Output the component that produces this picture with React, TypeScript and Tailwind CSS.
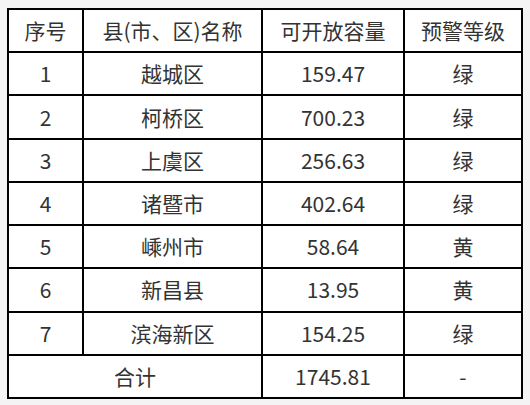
import React from "react";

const rows = [
  ["1", "越城区", "159.47", "绿"],
  ["2", "柯桥区", "700.23", "绿"],
  ["3", "上虞区", "256.63", "绿"],
  ["4", "诸暨市", "402.64", "绿"],
  ["5", "嵊州市", "58.64", "黄"],
  ["6", "新昌县", "13.95", "黄"],
  ["7", "滨海新区", "154.25", "绿"],
];

const cell = "bg-white flex items-center justify-center";

export default function App() {
  return (
    <div
      className="w-[530px] h-[405px] overflow-hidden bg-[#f4f4f4] pt-[8px] pl-[7px]"
      style={{ fontFamily: '"Noto Sans CJK SC", "Noto Sans", sans-serif' }}
    >
      <div className="w-[516px] h-[391px] bg-black p-[2px] grid grid-cols-[73px_177px_140px_116px] grid-rows-9 gap-[2px] text-[21px] leading-none text-[#333]">
        <div className={cell}>序号</div>
        <div className={cell}>县(市、区)名称</div>
        <div className={cell}>可开放容量</div>
        <div className={cell}>预警等级</div>
        {rows.map((r) =>
          r.map((v, i) => (
            <div key={r[0] + i} className={cell}>
              {v}
            </div>
          ))
        )}
        <div className={cell + " col-span-2"}>合计</div>
        <div className={cell}>1745.81</div>
        <div className={cell}>-</div>
      </div>
    </div>
  );
}
